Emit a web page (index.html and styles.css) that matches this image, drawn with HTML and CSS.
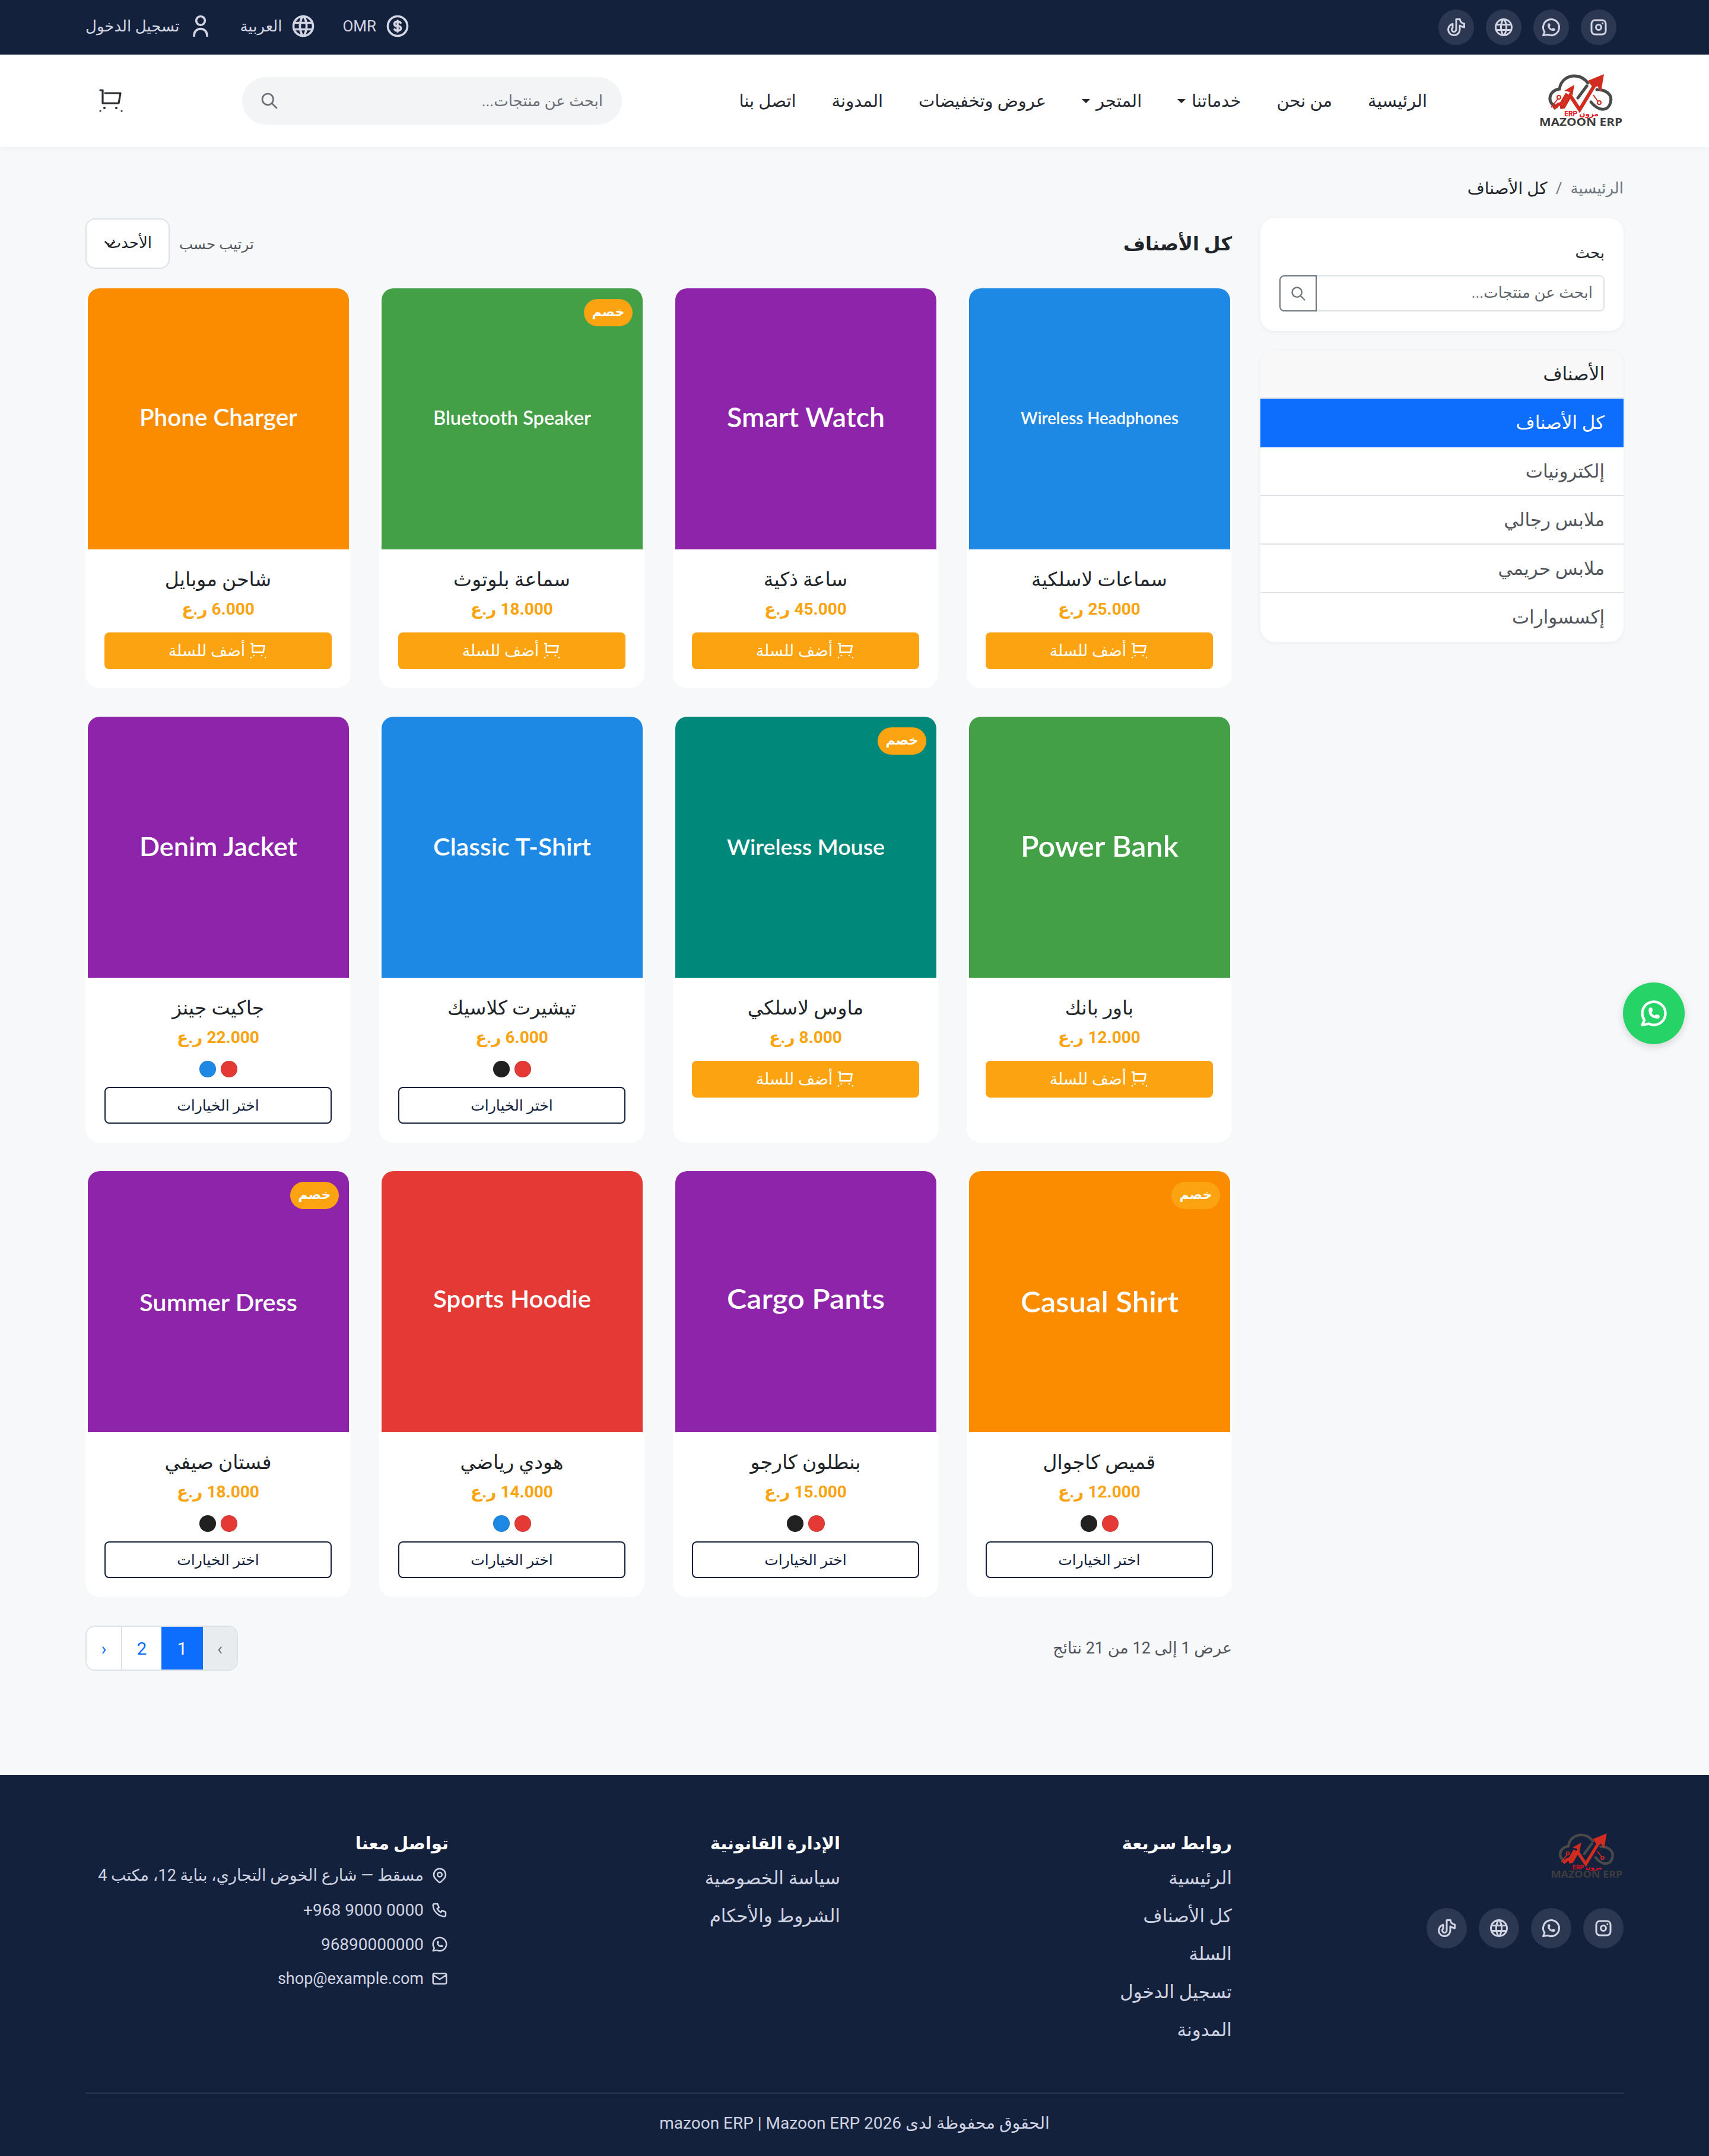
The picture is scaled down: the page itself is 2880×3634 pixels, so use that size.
FILE: index.html
```html
<!DOCTYPE html>
<html lang="ar" dir="rtl">
<head>
<meta charset="utf-8">
<title>كل الأصناف</title>
<link rel="stylesheet" href="styles.css">
</head>
<body>
<svg class="sprite" aria-hidden="true">
  <symbol id="i-tiktok" viewBox="0 0 24 24"><path d="M21 7.917v4.034a9.948 9.948 0 0 1-5-1.951v4.5a6.5 6.5 0 1 1-8-6.326v4.326a2.5 2.5 0 1 0 4 2v-11.5h4.083a6.005 6.005 0 0 0 4.917 4.917z"/></symbol>
  <symbol id="i-world" viewBox="0 0 24 24"><path d="M3 12a9 9 0 1 0 18 0a9 9 0 0 0-18 0M3.6 9h16.8M3.6 15h16.8M11.5 3a17 17 0 0 0 0 18M12.5 3a17 17 0 0 1 0 18"/></symbol>
  <symbol id="i-whatsapp" viewBox="0 0 24 24"><path d="M3 21l1.65-3.8a9 9 0 1 1 3.4 2.9l-5.05.9M9 10a.5.5 0 0 0 1 0v-1a.5.5 0 0 0-1 0v1a5 5 0 0 0 5 5h1a.5.5 0 0 0 0-1h-1a.5.5 0 0 0 0 1"/></symbol>
  <symbol id="i-instagram" viewBox="0 0 24 24"><path d="M4 8a4 4 0 0 1 4-4h8a4 4 0 0 1 4 4v8a4 4 0 0 1-4 4h-8a4 4 0 0 1-4-4zM9 12a3 3 0 1 0 6 0a3 3 0 0 0-6 0M16.5 7.5v.01"/></symbol>
  <symbol id="i-coin" viewBox="0 0 24 24"><path d="M3 12a9 9 0 1 0 18 0a9 9 0 1 0-18 0M14.8 9a2 2 0 0 0-1.8-1h-2a2 2 0 1 0 0 4h2a2 2 0 1 1 0 4h-2a2 2 0 0 1-1.8-1M12 7v10"/></symbol>
  <symbol id="i-user" viewBox="0 0 24 24"><path d="M8 7a4 4 0 1 0 8 0a4 4 0 0 0-8 0M6 21c0-4 2.500-6.500 6-6.500s6 2.500 6 6.500"/></symbol>
  <symbol id="i-search" viewBox="0 0 24 24"><path d="M3 10a7 7 0 1 0 14 0a7 7 0 1 0-14 0M21 21l-6-6"/></symbol>
  <symbol id="i-cart" viewBox="0 0 24 24"><path d="M3 3h2v11h13.500l1.500-8.500H7"/><circle class="cart-dot" cx="6.500" cy="18" r="1"/><circle class="cart-dot" cx="16.500" cy="18" r="1"/><path d="M3 20.500h.01M21 20.500h.01"/></symbol>
  <symbol id="i-pin" viewBox="0 0 24 24"><path d="M9 11a3 3 0 1 0 6 0a3 3 0 0 0-6 0M17.657 16.657l-4.243 4.243a2 2 0 0 1-2.827 0l-4.244-4.243a8 8 0 1 1 11.314 0z"/></symbol>
  <symbol id="i-phone" viewBox="0 0 24 24"><path d="M5 4h4l2 5l-2.500 1.500a11 11 0 0 0 5 5l1.500-2.500l5 2v4a2 2 0 0 1-2 2a16 16 0 0 1-15-15a2 2 0 0 1 2-2"/></symbol>
  <symbol id="i-mail" viewBox="0 0 24 24"><path d="M3 7a2 2 0 0 1 2-2h14a2 2 0 0 1 2 2v10a2 2 0 0 1-2 2h-14a2 2 0 0 1-2-2v-10zM3 7l9 6l9-6"/></symbol>
  <symbol id="logo" viewBox="0 0 144 90">
    <g class="logo-cloud"><path d="M31 55C15 50 16 28 36 25C38 10 50 3 61 3C70 3 78 7 84 15"/><path d="M67 40L82 20"/><path d="M99 26C114 26 126 34 122 48C119 60 105 66 89 47"/></g>
    <g class="logo-red"><path class="logo-line" d="M26 58L34 51L39 50L49 33"/><path class="logo-line" d="M37 56L43 55L54 36L70 60L98 14"/><path class="logo-fill" d="M84 11L111 0L106 30L100 20L93 24z"/><path class="logo-fill" d="M44 28L61 18L58 36L53 30z"/><circle class="logo-ring" cx="35" cy="39" r="3"/><circle class="logo-ring" cx="103" cy="48" r="3"/><path class="logo-thin" d="M33 42L22 56M101 46L93 35"/></g>
    <text class="logo-ar" x="73" y="71" text-anchor="middle">مزون ERP</text>
    <text class="logo-en" x="72" y="87" text-anchor="middle" textLength="140" lengthAdjust="spacingAndGlyphs">MAZOON ERP</text>
  </symbol>
</svg>

<header class="topbar">
  <div class="topbar-social">
    <a class="social"><svg class="ico ico-36"><use href="#i-instagram"/></svg></a>
    <a class="social"><svg class="ico ico-36"><use href="#i-whatsapp"/></svg></a>
    <a class="social"><svg class="ico ico-36"><use href="#i-world"/></svg></a>
    <a class="social"><svg class="ico ico-36"><use href="#i-tiktok"/></svg></a>
  </div>
  <div class="topbar-links">
    <a class="top-link"><svg class="ico ico-44"><use href="#i-coin"/></svg><span>OMR</span></a>
    <a class="top-link"><svg class="ico ico-44"><use href="#i-world"/></svg><span>العربية</span></a>
    <a class="top-link"><svg class="ico ico-44"><use href="#i-user"/></svg><span>تسجيل الدخول</span></a>
  </div>
</header>

<nav class="navbar">
  <svg class="brand"><use href="#logo"/></svg>
  <ul class="nav-links">
    <li><a>الرئيسية</a></li>
    <li><a>من نحن</a></li>
    <li><a class="caret">خدماتنا</a></li>
    <li><a class="caret">المتجر</a></li>
    <li><a>عروض وتخفيضات</a></li>
    <li><a>المدونة</a></li>
    <li><a>اتصل بنا</a></li>
  </ul>
  <div class="nav-search">
    <span class="nav-search-text">ابحث عن منتجات...</span>
    <svg class="ico ico-32"><use href="#i-search"/></svg>
  </div>
  <a class="nav-cart"><svg class="ico ico-48"><use href="#i-cart"/></svg></a>
</nav>

<main class="page">
  <ol class="crumbs">
    <li class="crumb-home">الرئيسية</li>
    <li class="crumb-sep">/</li>
    <li class="crumb-now">كل الأصناف</li>
  </ol>

  <div class="layout">
    <aside class="sidebar">
      <section class="box search-box">
        <h6 class="box-title">بحث</h6>
        <div class="input-group">
          <span class="input-field">ابحث عن منتجات...</span>
          <span class="input-btn"><svg class="ico ico-28"><use href="#i-search"/></svg></span>
        </div>
      </section>
      <section class="box cats">
        <h6 class="cats-head">الأصناف</h6>
        <a class="cat active">كل الأصناف</a>
        <a class="cat">إلكترونيات</a>
        <a class="cat">ملابس رجالي</a>
        <a class="cat">ملابس حريمي</a>
        <a class="cat">إكسسوارات</a>
      </section>
    </aside>

    <section class="content">
      <div class="content-head">
        <h1 class="content-title">كل الأصناف</h1>
        <div class="sort">
          <span class="sort-label">ترتيب حسب</span>
          <span class="sort-select">الأحدث<svg class="sort-chevron" viewBox="0 0 16 16"><path d="M2 5l6 6 6-6"/></svg></span>
        </div>
      </div>

      <div class="grid">
        <article class="card">
          <svg class="thumb" viewBox="0 0 440 440"><rect class="c-blue" width="440" height="440"/><text class="t28" x="220" y="222" textLength="266" lengthAdjust="spacingAndGlyphs">Wireless Headphones</text></svg>
          <div class="card-body"><h3 class="p-name">سماعات لاسلكية</h3><div class="p-price"><span>25.000</span> ر.ع</div><a class="btn-cart"><svg class="ico ico-32"><use href="#i-cart"/></svg>أضف للسلة</a></div>
        </article>
        <article class="card">
          <svg class="thumb" viewBox="0 0 440 440"><rect class="c-purple" width="440" height="440"/><text class="t46" x="220" y="222" textLength="266" lengthAdjust="spacingAndGlyphs">Smart Watch</text></svg>
          <div class="card-body"><h3 class="p-name">ساعة ذكية</h3><div class="p-price"><span>45.000</span> ر.ع</div><a class="btn-cart"><svg class="ico ico-32"><use href="#i-cart"/></svg>أضف للسلة</a></div>
        </article>
        <article class="card">
          <svg class="thumb" viewBox="0 0 440 440"><rect class="c-green" width="440" height="440"/><text class="t32" x="220" y="222" textLength="266" lengthAdjust="spacingAndGlyphs">Bluetooth Speaker</text></svg>
          <span class="badge">خصم</span>
          <div class="card-body"><h3 class="p-name">سماعة بلوتوث</h3><div class="p-price"><span>18.000</span> ر.ع</div><a class="btn-cart"><svg class="ico ico-32"><use href="#i-cart"/></svg>أضف للسلة</a></div>
        </article>
        <article class="card">
          <svg class="thumb" viewBox="0 0 440 440"><rect class="c-orange" width="440" height="440"/><text class="t40" x="220" y="222" textLength="266" lengthAdjust="spacingAndGlyphs">Phone Charger</text></svg>
          <div class="card-body"><h3 class="p-name">شاحن موبايل</h3><div class="p-price"><span>6.000</span> ر.ع</div><a class="btn-cart"><svg class="ico ico-32"><use href="#i-cart"/></svg>أضف للسلة</a></div>
        </article>

        <article class="card">
          <svg class="thumb" viewBox="0 0 440 440"><rect class="c-green" width="440" height="440"/><text class="t48" x="220" y="224" textLength="266" lengthAdjust="spacingAndGlyphs">Power Bank</text></svg>
          <div class="card-body"><h3 class="p-name">باور بانك</h3><div class="p-price"><span>12.000</span> ر.ع</div><a class="btn-cart"><svg class="ico ico-32"><use href="#i-cart"/></svg>أضف للسلة</a></div>
        </article>
        <article class="card">
          <svg class="thumb" viewBox="0 0 440 440"><rect class="c-teal" width="440" height="440"/><text class="t36" x="220" y="224" textLength="266" lengthAdjust="spacingAndGlyphs">Wireless Mouse</text></svg>
          <span class="badge">خصم</span>
          <div class="card-body"><h3 class="p-name">ماوس لاسلكي</h3><div class="p-price"><span>8.000</span> ر.ع</div><a class="btn-cart"><svg class="ico ico-32"><use href="#i-cart"/></svg>أضف للسلة</a></div>
        </article>
        <article class="card">
          <svg class="thumb" viewBox="0 0 440 440"><rect class="c-blue" width="440" height="440"/><text class="t40" x="220" y="224" textLength="266" lengthAdjust="spacingAndGlyphs">Classic T-Shirt</text></svg>
          <div class="card-body"><h3 class="p-name">تيشيرت كلاسيك</h3><div class="p-price"><span>6.000</span> ر.ع</div><div class="dots"><i class="dot d-red"></i><i class="dot d-black"></i></div><a class="btn-opt">اختر الخيارات</a></div>
        </article>
        <article class="card">
          <svg class="thumb" viewBox="0 0 440 440"><rect class="c-purple" width="440" height="440"/><text class="t44" x="220" y="224" textLength="266" lengthAdjust="spacingAndGlyphs">Denim Jacket</text></svg>
          <div class="card-body"><h3 class="p-name">جاكيت جينز</h3><div class="p-price"><span>22.000</span> ر.ع</div><div class="dots"><i class="dot d-red"></i><i class="dot d-blue"></i></div><a class="btn-opt">اختر الخيارات</a></div>
        </article>

        <article class="card">
          <svg class="thumb" viewBox="0 0 440 440"><rect class="c-orange" width="440" height="440"/><text class="t48" x="220" y="226" textLength="266" lengthAdjust="spacingAndGlyphs">Casual Shirt</text></svg>
          <span class="badge">خصم</span>
          <div class="card-body"><h3 class="p-name">قميص كاجوال</h3><div class="p-price"><span>12.000</span> ر.ع</div><div class="dots"><i class="dot d-red"></i><i class="dot d-black"></i></div><a class="btn-opt">اختر الخيارات</a></div>
        </article>
        <article class="card">
          <svg class="thumb" viewBox="0 0 440 440"><rect class="c-purple" width="440" height="440"/><text class="t46" x="220" y="220" textLength="266" lengthAdjust="spacingAndGlyphs">Cargo Pants</text></svg>
          <div class="card-body"><h3 class="p-name">بنطلون كارجو</h3><div class="p-price"><span>15.000</span> ر.ع</div><div class="dots"><i class="dot d-red"></i><i class="dot d-black"></i></div><a class="btn-opt">اختر الخيارات</a></div>
        </article>
        <article class="card">
          <svg class="thumb" viewBox="0 0 440 440"><rect class="c-red" width="440" height="440"/><text class="t40" x="220" y="220" textLength="266" lengthAdjust="spacingAndGlyphs">Sports Hoodie</text></svg>
          <div class="card-body"><h3 class="p-name">هودي رياضي</h3><div class="p-price"><span>14.000</span> ر.ع</div><div class="dots"><i class="dot d-red"></i><i class="dot d-blue"></i></div><a class="btn-opt">اختر الخيارات</a></div>
        </article>
        <article class="card">
          <svg class="thumb" viewBox="0 0 440 440"><rect class="c-purple" width="440" height="440"/><text class="t40" x="220" y="226" textLength="266" lengthAdjust="spacingAndGlyphs">Summer Dress</text></svg>
          <span class="badge">خصم</span>
          <div class="card-body"><h3 class="p-name">فستان صيفي</h3><div class="p-price"><span>18.000</span> ر.ع</div><div class="dots"><i class="dot d-red"></i><i class="dot d-black"></i></div><a class="btn-opt">اختر الخيارات</a></div>
        </article>
      </div>

      <div class="pager-row">
        <span class="pager-info">عرض 1 إلى 12 من 21 نتائج</span>
        <ul class="pager">
          <li class="pg pg-off">›</li>
          <li class="pg pg-on">1</li>
          <li class="pg">2</li>
          <li class="pg">‹</li>
        </ul>
      </div>
    </section>
  </div>
</main>

<a class="wa-float"><svg class="ico ico-wa"><use href="#i-whatsapp"/></svg></a>

<footer class="footer">
  <div class="footer-grid">
    <div class="f-brand">
      <svg class="f-logo"><use href="#logo"/></svg>
      <div class="f-social">
        <a class="social social-lg"><svg class="ico ico-36"><use href="#i-instagram"/></svg></a>
        <a class="social social-lg"><svg class="ico ico-36"><use href="#i-whatsapp"/></svg></a>
        <a class="social social-lg"><svg class="ico ico-36"><use href="#i-world"/></svg></a>
        <a class="social social-lg"><svg class="ico ico-36"><use href="#i-tiktok"/></svg></a>
      </div>
    </div>
    <div class="f-col">
      <h5 class="f-head">روابط سريعة</h5>
      <a class="f-link">الرئيسية</a>
      <a class="f-link">كل الأصناف</a>
      <a class="f-link">السلة</a>
      <a class="f-link">تسجيل الدخول</a>
      <a class="f-link">المدونة</a>
    </div>
    <div class="f-col">
      <h5 class="f-head">الإدارة القانونية</h5>
      <a class="f-link">سياسة الخصوصية</a>
      <a class="f-link">الشروط والأحكام</a>
    </div>
    <div class="f-col">
      <h5 class="f-head f-head-tight">تواصل معنا</h5>
      <div class="f-contact"><svg class="ico ico-30"><use href="#i-pin"/></svg><span>مسقط — شارع الخوض التجاري، بناية 12، مكتب 4</span></div>
      <div class="f-contact"><svg class="ico ico-30"><use href="#i-phone"/></svg><span class="f-num" dir="ltr">+968 9000 0000</span></div>
      <div class="f-contact"><svg class="ico ico-30"><use href="#i-whatsapp"/></svg><span class="f-num">96890000000</span></div>
      <div class="f-contact"><svg class="ico ico-30"><use href="#i-mail"/></svg><span>shop@example.com</span></div>
    </div>
  </div>
  <div class="copyright">الحقوق محفوظة لدى 2026 mazoon ERP | Mazoon ERP</div>
</footer>
</body>
</html>
```
FILE: styles.css
```css
* { box-sizing: border-box; }
html, body { margin: 0; padding: 0; }
body {
  position: relative;
  background: #f7f8fa;
  color: #212529;
  font-family: Roboto, "DejaVu Sans", sans-serif;
  font-size: 28px;
}
a { color: inherit; text-decoration: none; }
ul, ol { list-style: none; margin: 0; padding: 0; }
h1, h3, h5, h6 { margin: 0; }
.sprite { display: none; }

.ico { fill: none; stroke: currentColor; stroke-width: 2; stroke-linecap: round; stroke-linejoin: round; flex: none; }
.cart-dot { fill: currentColor; stroke: none; }
.ico-28 { width: 28px; height: 28px; }
.ico-30 { width: 30px; height: 30px; }
.ico-32 { width: 32px; height: 32px; }
.ico-36 { width: 36px; height: 36px; }
.ico-44 { width: 44px; height: 44px; }
.ico-48 { width: 48px; height: 48px; stroke-width: 1.6; }
.ico-wa { width: 52px; height: 52px; }

/* top bar */
.topbar {
  height: 92px;
  padding: 0 156px 0 144px;
  background: #14213d;
  color: #d3d5e3;
  display: flex;
  align-items: center;
  justify-content: space-between;
}
.topbar-social { display: flex; gap: 20px; }
.social {
  width: 60px; height: 60px;
  border-radius: 50%;
  background: #2c3752;
  color: #d3d5e3;
  display: flex; align-items: center; justify-content: center;
}
.social-lg { width: 68px; height: 68px; }
.topbar-links { display: flex; gap: 44px; padding-bottom: 4px; font-size: 26px; }
.top-link { display: flex; align-items: center; gap: 14px; }

/* navbar */
.navbar {
  height: 156px;
  padding: 0 144px;
  background: #fff;
  box-shadow: 0 2px 8px rgba(0,0,0,.04);
  display: flex;
  align-items: center;
  position: relative;
}
.brand { width: 144px; height: 90px; flex: none; }
.logo-cloud path { fill: none; stroke: #4a4a4a; stroke-width: 5; stroke-linecap: round; }
.logo-line { fill: none; stroke: #d22b20; stroke-width: 6; }
.logo-thin { fill: none; stroke: #d22b20; stroke-width: 2; }
.logo-fill { fill: #d22b20; }
.logo-ring { fill: none; stroke: #d22b20; stroke-width: 2; }
.logo-ar { fill: #e8101f; font-size: 12px; font-weight: 700; font-family: Roboto, "DejaVu Sans", sans-serif; }
.logo-en { fill: #3d3d3d; font-size: 18px; font-weight: 700; font-family: "Open Sans", sans-serif; direction: ltr; }
.nav-links { display: flex; gap: 60px; margin-right: 187px; font-size: 29px; color: #252830; }
.caret { display: flex; align-items: center; gap: 10px; }
.caret::after { content: ""; border: 7px solid transparent; border-top-color: #252830; border-bottom: 0; }
.nav-search {
  width: 640px; height: 80px;
  margin-right: auto; margin-left: 197px;
  padding: 0 32px 0 30px;
  border-radius: 40px;
  background: #f3f4f6;
  color: #6c6f78;
  display: flex; align-items: center; justify-content: space-between;
  font-size: 26px;
}
.nav-cart { width: 67px; color: #2a2c33; display: flex; justify-content: flex-start; }

/* page */
.page { padding: 48px 144px 176px; }
.crumbs { display: flex; gap: 14px; height: 42px; margin-bottom: 30px; align-items: center; font-size: 26px; }
.crumb-home { color: #6c757d; }
.crumb-sep { color: #6c757d; }
.crumb-now { color: #212529; font-size: 28px; }
.layout { display: grid; grid-template-columns: 612px 1932px; gap: 48px; }
.sidebar { display: flex; flex-direction: column; gap: 33px; }
.box { background: #fff; border-radius: 24px; box-shadow: 0 2px 8px rgba(0,0,0,.05); overflow: hidden; }
.search-box { padding: 32px; height: 190px; }
.box-title { font-size: 26px; font-weight: 400; line-height: 52px; margin-bottom: 12px; color: #212529; }
.input-group { display: flex; height: 61px; }
.input-field {
  flex: 1;
  padding: 0 18px;
  border: 2px solid #dee2e6;
  border-left: 0;
  border-radius: 0 8px 8px 0;
  color: #62666d;
  font-size: 26px;
  line-height: 54px;
}
.input-btn {
  width: 63px;
  border: 2px solid #6c757d;
  border-radius: 8px 0 0 8px;
  color: #6c757d;
  display: flex; align-items: center; justify-content: center;
}
.cats-head { height: 81px; line-height: 80px; padding: 0 32px; background: #f8f8f8; border-bottom: 2px solid #dee2e6; font-size: 31px; font-weight: 400; }
.cat { display: block; height: 82px; line-height: 82px; padding: 0 32px; color: #52565c; font-size: 31px; border-bottom: 2px solid #dee2e6; }
.cat:last-child { border-bottom: 0; }
.cat.active { background: #0d6efd; color: #fff; border-bottom: 0; }

.content-head { display: flex; align-items: center; justify-content: space-between; height: 85px; margin-bottom: 33px; }
.content-title { font-size: 32px; font-weight: 700; color: #212529; }
.sort { display: flex; align-items: center; gap: 16px; }
.sort-label { color: #52565c; font-size: 24.5px; padding-top: 2px; }
.sort-select {
  width: 142px; height: 85px;
  background: #fff;
  border: 2px solid #dee2e6;
  border-radius: 16px;
  padding-right: 28px;
  line-height: 78px;
  font-size: 26px;
  position: relative;
}
.sort-chevron { position: absolute; left: 28px; top: 30px; width: 22px; height: 22px; fill: none; stroke: #212529; stroke-width: 2; }

.grid { display: grid; grid-template-columns: repeat(4, 447px); gap: 48px; }
.card { position: relative; background: #fff; border-radius: 24px; padding: 0 3.5px; min-width: 0; }
.thumb { display: block; width: 440px; height: 440px; border-radius: 20px 20px 0 0; direction: ltr; }
.thumb text { fill: #fff; font-family: Lato, sans-serif; font-weight: 600; text-anchor: middle; dominant-baseline: middle; }
.t28 { font-size: 28px; } .t32 { font-size: 32px; } .t36 { font-size: 36px; } .t40 { font-size: 40px; } .t44 { font-size: 44px; } .t46 { font-size: 46px; } .t48 { font-size: 48px; }
.c-blue { fill: #1e88e5; } .c-purple { fill: #8e24aa; } .c-green { fill: #43a047; } .c-orange { fill: #fb8c00; } .c-teal { fill: #00897b; } .c-red { fill: #e53935; }
.badge {
  position: absolute; top: 18px; right: 20px;
  width: 82px; height: 46px;
  border-radius: 23px;
  background: #fca311;
  color: #fff;
  text-align: center;
  font-size: 22px; font-weight: 700; line-height: 44px;
}
.card-body { padding: 27px 28.5px 32px; text-align: center; }
.p-name { font-size: 33px; font-weight: 400; line-height: 48px; color: #212529; }
.p-price { margin-top: 4px; line-height: 44px; font-size: 28px; font-weight: 700; color: #fca311; }
.p-price span { unicode-bidi: isolate; }
.btn-cart, .btn-opt {
  display: flex; align-items: center; justify-content: center; gap: 6px;
  height: 62px; margin-top: 17px;
  border-radius: 8px;
  font-size: 27px;
}
.btn-cart { background: #fca311; color: #fff; }
.btn-opt { border: 2px solid #14213d; color: #14213d; font-weight: 500; margin-top: 16px; font-size: 25px; }
.dots { display: flex; justify-content: center; gap: 8px; margin-top: 17px; height: 28px; }
.dot { width: 28px; height: 28px; border-radius: 50%; border: 1px solid rgba(0,0,0,.1); }
.d-red { background: #e53935; } .d-black { background: #212121; } .d-blue { background: #1e88e5; }

.pager-row { display: flex; align-items: center; justify-content: space-between; margin-top: 48px; }
.pager-info { color: #52565c; font-size: 27px; }
.pager { display: flex; height: 76px; border: 2px solid #dee2e6; border-radius: 16px; overflow: hidden; }
.pg { display: flex; align-items: center; justify-content: center; width: 68px; background: #fff; color: #0d6efd; font-size: 30px; border-left: 2px solid #dee2e6; }
.pg:last-child { border-left: 0; width: 58px; }
.pg-off { width: 57px; background: #e9ecef; color: #6c757d; border-left: 0; }
.pg-on { width: 70px; background: #0d6efd; color: #fff; border-left: 0; }

.wa-float {
  position: absolute; top: 1656px; right: 41px;
  width: 104px; height: 104px;
  border-radius: 50%;
  background: #25d366;
  color: #fff;
  display: flex; align-items: center; justify-content: center;
  box-shadow: 0 4px 14px rgba(0,0,0,.15);
}

/* footer */
.footer { height: 642px; padding: 90px 144px 0; background: #14213d; color: #d0d3e2; }
.footer-grid { display: grid; grid-template-columns: repeat(4, 612px); gap: 48px; height: 447px; border-bottom: 2px solid #2a3650; }
.f-brand { padding-top: 8px; }
.f-logo { display: block; width: 124px; height: 78px; }
.f-social { display: flex; gap: 20px; margin-top: 48px; }
.f-col { display: flex; flex-direction: column; }
.f-head { font-size: 29px; font-weight: 700; line-height: 50px; color: #fff; margin-bottom: 2px; }
.f-head-tight { margin-bottom: 0; }
.f-link { font-size: 31px; line-height: 64px; }
.f-contact { display: flex; align-items: center; gap: 12px; height: 58px; font-size: 27px; }
.f-num { font-size: 28px; }
.copyright { padding-top: 28px; line-height: 44px; text-align: center; font-size: 28px; }
```
